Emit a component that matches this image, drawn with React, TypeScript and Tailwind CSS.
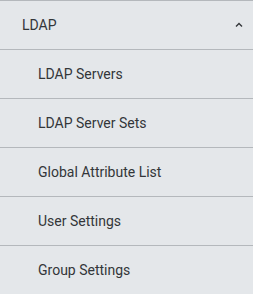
import React from 'react';

const items = ['LDAP Servers', 'LDAP Server Sets', 'Global Attribute List', 'User Settings', 'Group Settings'];

export default function App() {
    return (
        <div className="w-[253px] h-[294px] bg-[#e4e7ea] border-t border-[#b4b8bc] overflow-hidden text-[14px] text-[#333639]" style={{ fontFamily: 'Roboto, "Liberation Sans", sans-serif' }}>
            <div className="h-[49px] flex items-center justify-between pl-[22px] pr-[10px] border-b border-[#b4b8bc]">
                <span>LDAP</span>
                <svg width="8" height="6" viewBox="0 0 8 6">
                    <polyline points="1,4.5 4,1.5 7,4.5" fill="none" stroke="#333639" strokeWidth="1.4" />
                </svg>
            </div>
            {items.map((item, i) => (
                <div
                    key={item}
                    className={`h-[49px] flex items-center pl-[38px] ${i < items.length - 1 ? 'border-b border-[#b4b8bc]' : ''}`}
                >
                    {item}
                </div>
            ))}
        </div>
    );
}
